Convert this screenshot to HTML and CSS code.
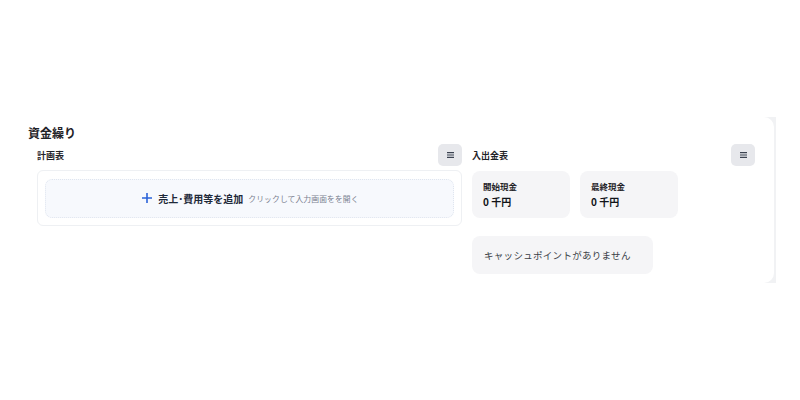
FILE: index.html
```html
<!DOCTYPE html>
<html lang="ja">
<head>
<meta charset="utf-8">
<link rel="stylesheet" href="styles.css">
</head>
<body>
<div class="page">
  <div class="frame">
    <div class="card">
      <h1 class="title">資金繰り</h1>
      <div class="columns">
        <section class="col col-left">
          <div class="col-head">
            <span class="col-title">計画表</span>
            <button class="menu-btn"><svg width="7" height="6" viewBox="0 0 7 6"><path d="M0 0.6H7M0 3H7M0 5.4H7" stroke="#3b4250" stroke-width="1.1"/></svg></button>
          </div>
          <div class="panel">
            <div class="add-box">
              <svg class="plus" width="10" height="10" viewBox="0 0 10 10"><path d="M5 0V10M0 5H10" stroke="#2b63d9" stroke-width="1.6"/></svg>
              <span class="add-label">売上･費用等を追加</span>
              <span class="add-hint">クリックして入力画面をを開く</span>
            </div>
          </div>
        </section>
        <section class="col col-right">
          <div class="col-head">
            <span class="col-title">入出金表</span>
            <button class="menu-btn"><svg width="7" height="6" viewBox="0 0 7 6"><path d="M0 0.6H7M0 3H7M0 5.4H7" stroke="#3b4250" stroke-width="1.1"/></svg></button>
          </div>
          <div class="stats">
            <div class="stat">
              <div class="stat-label">開始現金</div>
              <div class="stat-value">0 千円</div>
            </div>
            <div class="stat">
              <div class="stat-label">最終現金</div>
              <div class="stat-value">0 千円</div>
            </div>
          </div>
          <div class="empty">キャッシュポイントがありません</div>
        </section>
      </div>
    </div>
  </div>
</div>
</body>
</html>
```

FILE: styles.css
```css
* { box-sizing: border-box; }
html, body { margin: 0; padding: 0; background: #ffffff; }
body {
  font-family: "Noto Sans CJK JP", "Noto Sans", sans-serif;
  color: #1f2328;
  width: 800px;
  height: 400px;
  overflow: hidden;
}
.page { padding-top: 117px; }
.frame {
  width: 776px;
  height: 166px;
  background: #f1f2f4;
}
.card {
  width: 774px;
  height: 166px;
  background: #ffffff;
  border-radius: 0 10px 10px 0;
  padding: 7px 19px 0 28px;
}
.title {
  margin: 0;
  font-size: 12px;
  line-height: 17px;
  font-weight: 700;
  color: #1f2328;
}
.columns {
  display: flex;
  gap: 10px;
  margin-left: 9px;
  margin-top: 3px;
}
.col-left { width: 425px; }
.col-right { width: 283px; }
.col-head {
  display: flex;
  align-items: center;
  justify-content: space-between;
  height: 22px;
}
.col-title {
  font-size: 9px;
  font-weight: 700;
  color: #1f2328;
}
.menu-btn {
  width: 24px;
  height: 22px;
  border: none;
  border-radius: 5px;
  background: #e7e8ec;
  padding: 0;
  display: flex;
  align-items: center;
  justify-content: center;
}
.panel {
  margin-top: 4px;
  height: 56px;
  border: 1px solid #eef0f3;
  border-radius: 6px;
  padding: 8px 7px 7px 7px;
}
.add-box {
  height: 39px;
  border: 1px dotted #dfe5ef;
  border-radius: 7px;
  background: #f7f9fd;
  display: flex;
  align-items: center;
  justify-content: center;
  padding-left: 2px;
}
.plus {
  margin-right: 6px;
  position: relative;
  top: -1px;
}
.add-label {
  font-size: 10px;
  font-weight: 700;
  color: #1f2a3a;
  margin-right: 5px;
}
.add-hint {
  font-size: 7.8px;
  color: #7b8190;
  letter-spacing: 0.1px;
}
.stats {
  display: flex;
  gap: 10px;
  margin-top: 5px;
}
.stat {
  width: 98px;
  height: 47px;
  background: #f5f5f7;
  border-radius: 8px;
  padding: 9px 11px;
}
.stat-label {
  font-size: 8.5px;
  font-weight: 700;
  line-height: 12px;
  color: #1f2328;
}
.stat-value {
  font-size: 10px;
  font-weight: 700;
  line-height: 13px;
  margin-top: 3px;
  color: #111418;
}
.empty {
  margin-top: 18px;
  width: 181px;
  height: 38px;
  background: #f5f5f7;
  border-radius: 8px;
  padding-left: 12px;
  display: flex;
  align-items: center;
  font-size: 9.5px;
  color: #3a3f47;
  letter-spacing: 0.3px;
}
```
